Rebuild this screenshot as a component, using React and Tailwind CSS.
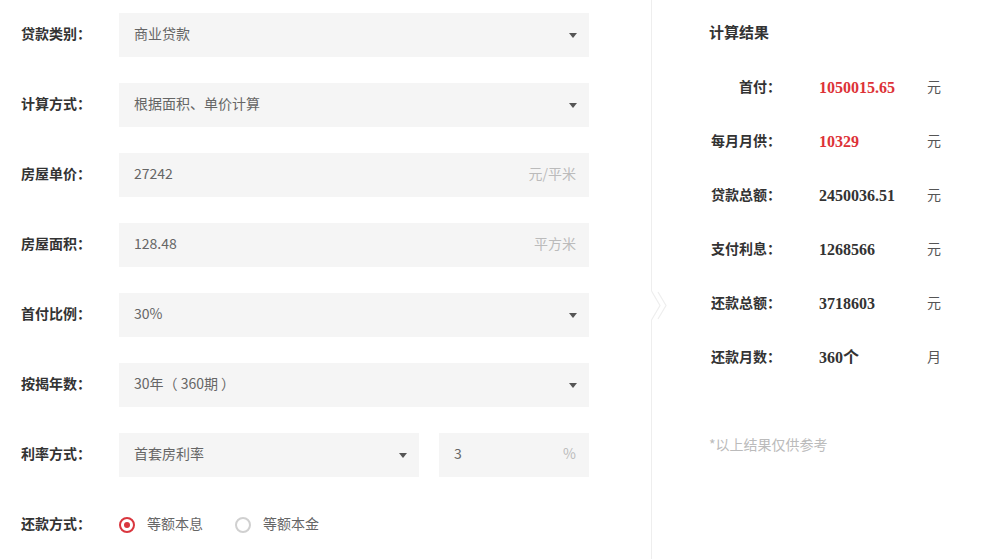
import React from 'react';

const font = { fontFamily: '"Noto Sans CJK SC", "Noto Sans", sans-serif' };

function Caret() {
  return (
    <svg className="w-[8px] h-[5px]" viewBox="0 0 8 5">
      <polygon points="0,0 8,0 4,5" fill="#555" />
    </svg>
  );
}

function Label({ children }) {
  return (
    <div className="w-[98px] shrink-0 pb-[3px] text-[14px] font-bold text-[#333] whitespace-nowrap">{children}</div>
  );
}

function Select({ value, className = 'w-[470px]' }) {
  return (
    <div className={`${className} h-[44px] bg-[#f5f5f5] flex items-center justify-between pl-[15px] pr-[12px]`}>
      <span className="pb-[3px] text-[14px] text-[#666] whitespace-pre">{value}</span>
      <Caret />
    </div>
  );
}

function Input({ value, unit, className = 'w-[470px]' }) {
  return (
    <div className={`${className} h-[44px] bg-[#f5f5f5] flex items-center justify-between pl-[15px] pr-[13px]`}>
      <span className="pb-[3px] text-[14px] text-[#666]">{value}</span>
      <span className="pb-[3px] text-[14px] text-[#bbb]">{unit}</span>
    </div>
  );
}

function Row({ label, children }) {
  return (
    <div className="flex items-center h-[44px]">
      <Label>{label}</Label>
      {children}
    </div>
  );
}

function Radio({ checked, label }) {
  return (
    <div className="flex items-center">
      <div
        className={`w-[16px] h-[16px] rounded-full border-2 flex items-center justify-center ${
          checked ? 'border-[#d9363e]' : 'border-[#d0d0d0]'
        }`}
      >
        {checked && <div className="w-[6px] h-[6px] rounded-full bg-[#d9363e]" />}
      </div>
      <span className="ml-[12px] pb-[3px] text-[14px] text-[#666]">{label}</span>
    </div>
  );
}

const results = [
  { label: '首付：', value: '1050015.65', unit: '元', red: true },
  { label: '每月月供：', value: '10329', unit: '元', red: true },
  { label: '贷款总额：', value: '2450036.51', unit: '元' },
  { label: '支付利息：', value: '1268566', unit: '元' },
  { label: '还款总额：', value: '3718603', unit: '元' },
  { label: '还款月数：', value: '360个', unit: '月' },
];

export default function App() {
  return (
    <div className="w-[995px] h-[559px] bg-white flex overflow-hidden" style={font}>
      {/* form */}
      <div className="w-[651px] shrink-0 pl-[21px] pt-[13px] flex flex-col gap-[26px]">
        <Row label="贷款类别：">
          <Select value="商业贷款" />
        </Row>
        <Row label="计算方式：">
          <Select value="根据面积、单价计算" />
        </Row>
        <Row label="房屋单价：">
          <Input value="27242" unit="元/平米" />
        </Row>
        <Row label="房屋面积：">
          <Input value="128.48" unit="平方米" />
        </Row>
        <Row label="首付比例：">
          <Select value="30%" />
        </Row>
        <Row label="按揭年数：">
          <Select value="30年（ 360期 ）" />
        </Row>
        <Row label="利率方式：">
          <Select value="首套房利率" className="w-[300px]" />
          <Input value="3" unit="%" className="w-[150px] ml-[20px]" />
        </Row>
        <Row label="还款方式：">
          <div className="flex items-center gap-[32px]">
            <Radio checked label="等额本息" />
            <Radio label="等额本金" />
          </div>
        </Row>
      </div>

      {/* divider */}
      <div className="relative w-[1px] shrink-0 h-full">
        <div className="absolute left-0 top-0 w-[1px] h-[291px] bg-[#eee]" />
        <div className="absolute left-0 top-[320px] w-[1px] bottom-0 bg-[#eee]" />
        <svg className="absolute left-0 top-[289px] w-[20px] h-[33px]" viewBox="0 0 20 33">
          <polyline points="0.5,2 9,16.5 0.5,31" fill="none" stroke="#eee" strokeWidth="1.2" />
          <polyline points="7,3 15,16.5 7,30" fill="none" stroke="#eee" strokeWidth="1.2" />
        </svg>
      </div>

      {/* results */}
      <div className="flex-1 pl-[57px] pt-[22px]">
        <div className="text-[15px] font-bold text-[#333] leading-[20px]">计算结果</div>
        <div className="mt-[19px]">
          {results.map((r) => (
            <div key={r.label} className="flex items-center h-[54px]">
              <div className="w-[72px] shrink-0 flex justify-end whitespace-nowrap pb-[3px] text-[14px] font-bold text-[#333]">
                {r.label}
              </div>
              <div
                className={`ml-[38px] w-[108px] shrink-0 text-[16px] font-bold ${r.red ? 'text-[#dd3237]' : 'text-[#333]'}`}
                style={{ fontFamily: '"Liberation Serif", "Noto Sans CJK SC", serif' }}
              >
                {r.value}
              </div>
              <div className="pb-[3px] text-[14px] text-[#555]">{r.unit}</div>
            </div>
          ))}
        </div>
        <div className="mt-[49px] text-[14px] text-[#bbb] leading-[20px]">*以上结果仅供参考</div>
      </div>
    </div>
  );
}
